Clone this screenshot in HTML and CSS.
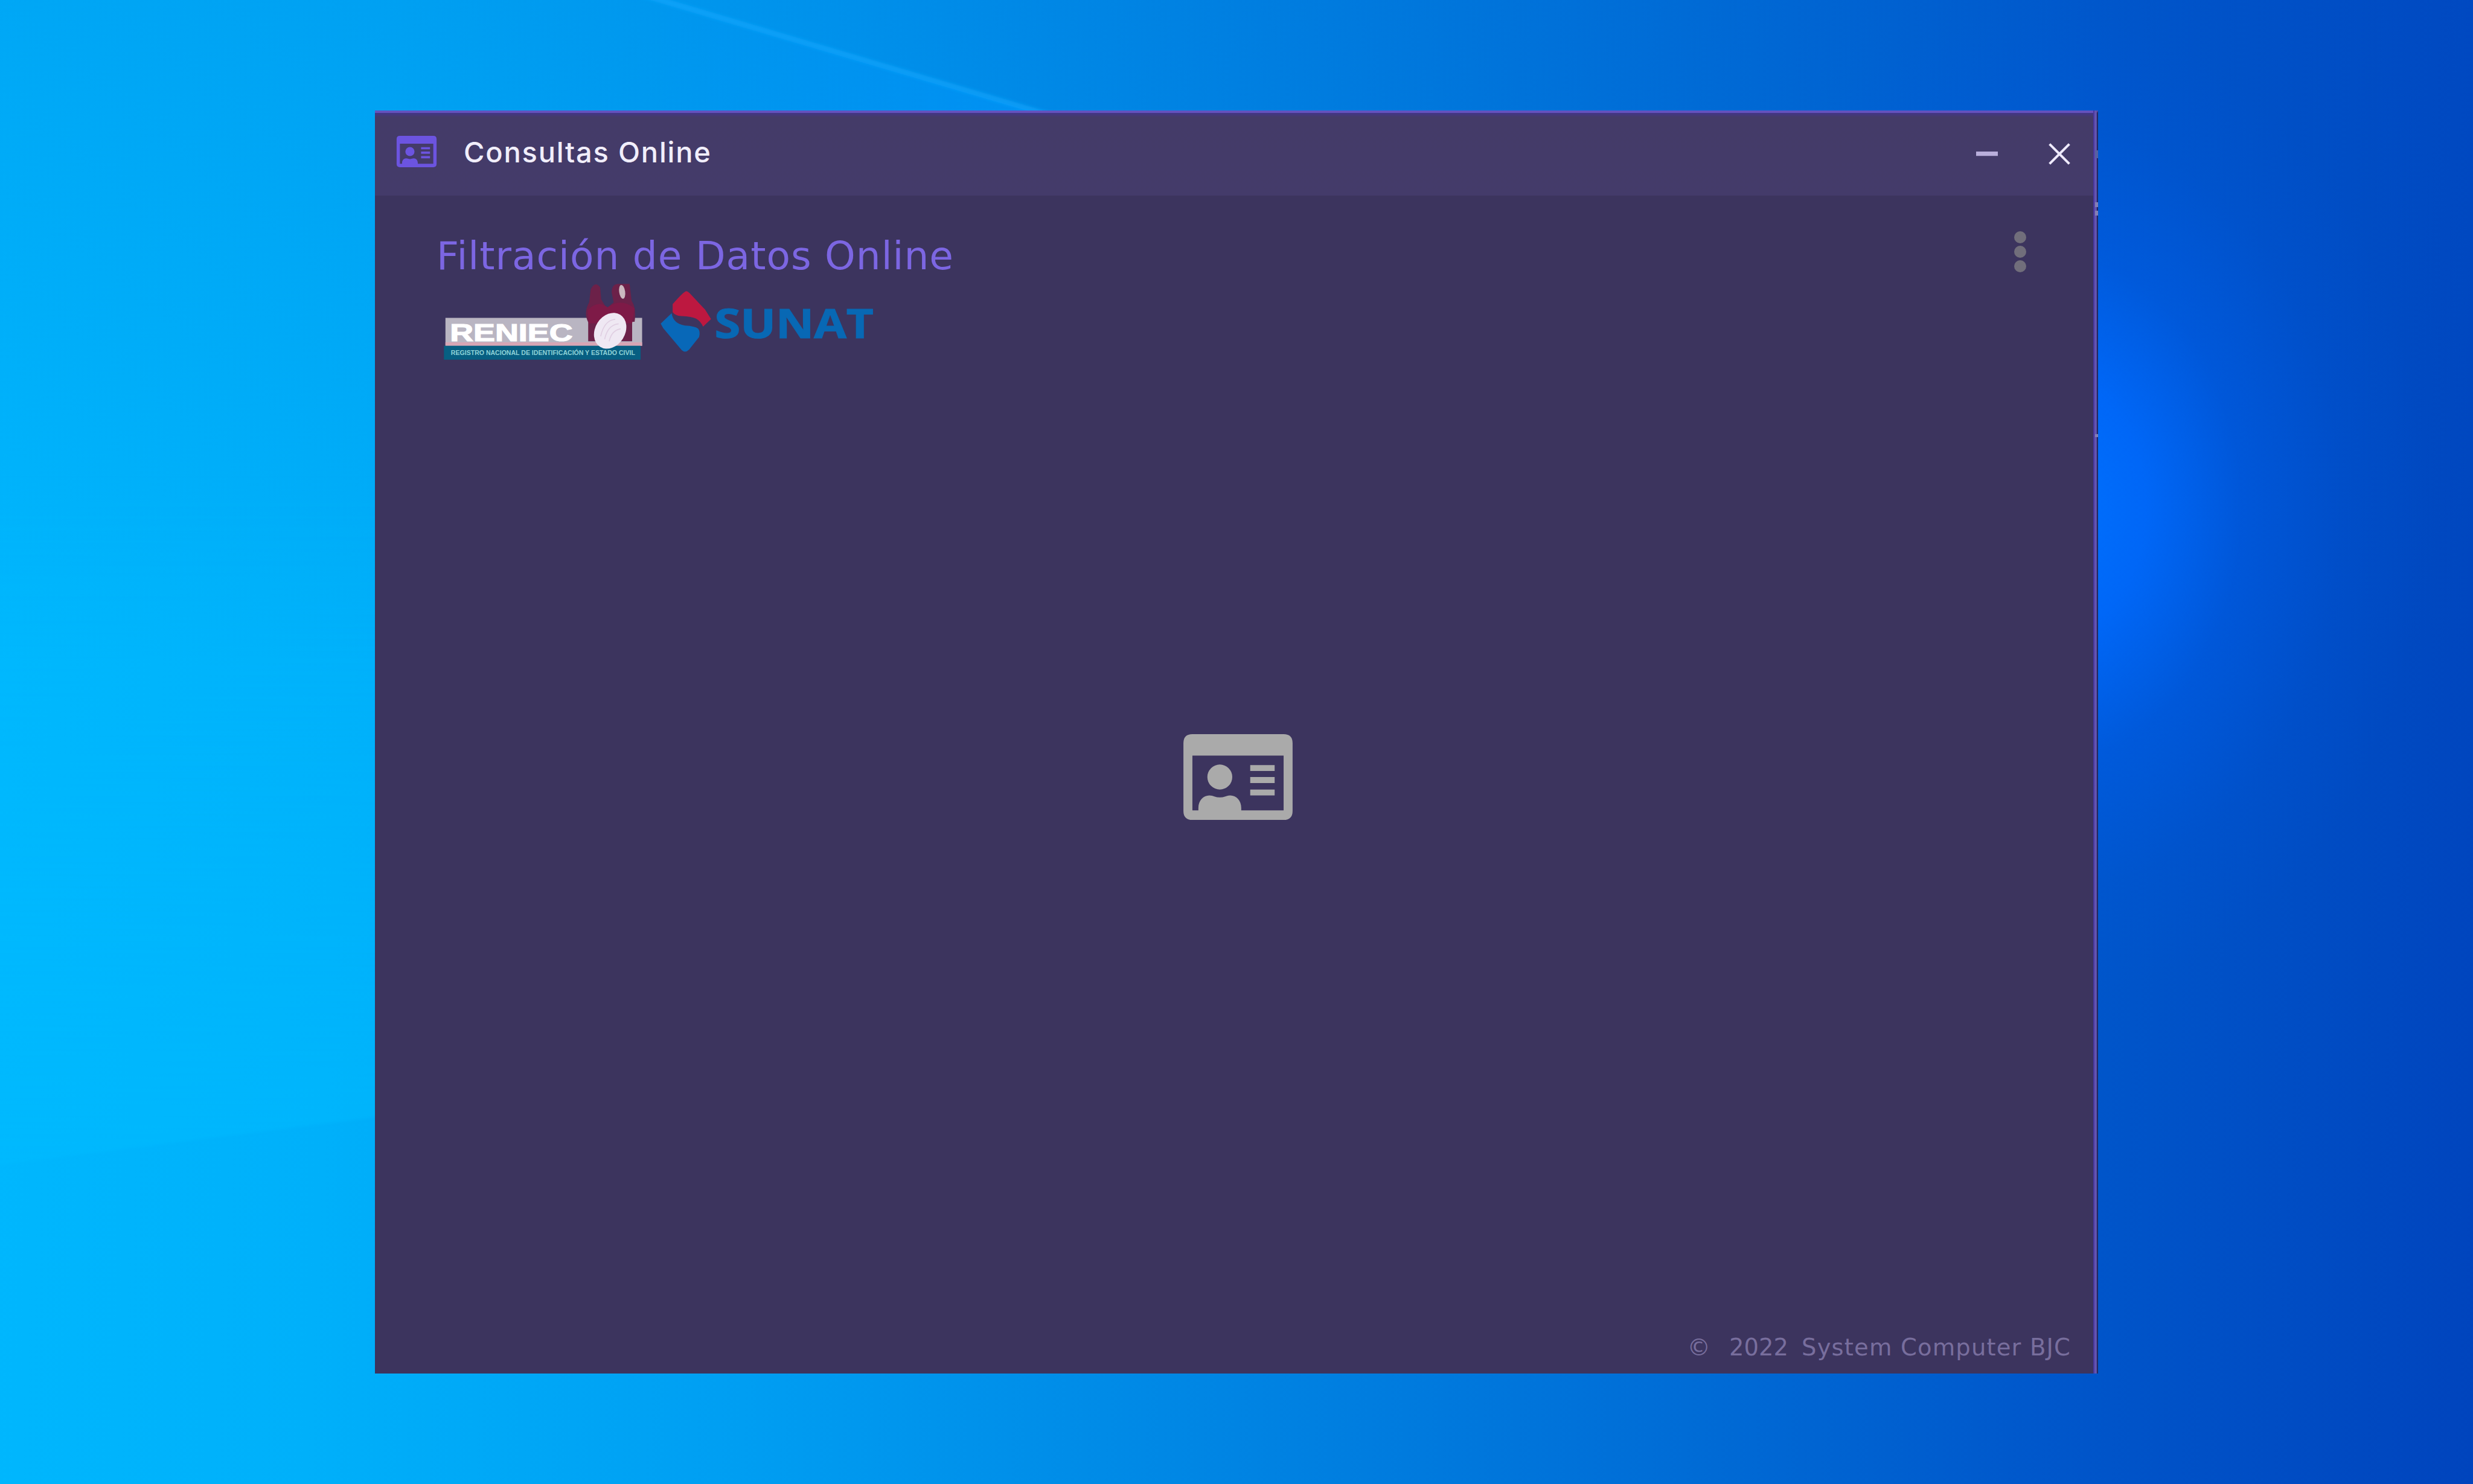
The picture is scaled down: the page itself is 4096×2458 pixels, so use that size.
FILE: index.html
```html
<!DOCTYPE html>
<html lang="es">
<head>
<meta charset="utf-8">
<title>Consultas Online</title>
<link rel="stylesheet" href="styles.css">
</head>
<body>
<main class="desktop">
  <svg class="rays" viewBox="0 0 1568 941" preserveAspectRatio="none" aria-hidden="true">
    <defs>
      <linearGradient id="haze" x1="0" x2="1"><stop offset="0" stop-color="#0098ff" stop-opacity="0"/><stop offset="1" stop-color="#0098ff" stop-opacity=".5"/></linearGradient>
      <linearGradient id="beam" x1="0" y1="0" x2="0" y2="1"><stop offset="0" stop-color="#00bcff" stop-opacity="0"/><stop offset="1" stop-color="#00bcff" stop-opacity=".45"/></linearGradient>
      <filter id="soft"><feGaussianBlur stdDeviation="1"/></filter>
    </defs>
    <path d="M404-3 660 72H404Z" fill="url(#haze)"/>
    <path d="M402-3 415-3 668 72 657 72Z" fill="#14a8ff" fill-opacity=".6" filter="url(#soft)"/>
    <path d="M-4 300H240V708L-4 739Z" fill="url(#beam)" filter="url(#soft)"/>
  </svg>
  <section class="window">
    <header class="titlebar">
      <svg class="title-icon" viewBox="0 0 219 172"><use href="#id-card"/></svg>
      <h1 class="title">Consultas Online</h1>
      <button class="control" aria-label="Minimizar"><svg viewBox="0 0 44 44"><path d="M0 21.500H44" stroke="#b9aedb" stroke-width="9"/></svg></button>
      <button class="control" aria-label="Cerrar"><svg viewBox="0 0 44 44"><path d="M2 2 42 42M42 2 2 42" stroke="#efeaff" stroke-width="5"/></svg></button>
    </header>
    <div class="content">
      <div class="heading-row">
        <h2 class="heading">Filtración de Datos Online</h2>
        <button class="more" aria-label="Opciones"><i></i><i></i><i></i></button>
      </div>
      <div class="logos">
        <svg class="reniec" viewBox="886 564 404 162">
          <path d="M893 637H1287V693H893Z" fill="#b9b5c2"/>
          <path d="M893 686H1287V693H893Z" fill="#d7a6b5"/>
          <path d="M890 693H1284V721H890Z" fill="#075f82"/>
          <path d="M1184 580Q1193 562 1203 576L1205 600 1216 618 1230 606 1226 586Q1226 570 1238 569H1262L1266 603Q1276 617 1272 645H1267V684H1179V646Q1169 626 1181 606Z" fill="#6c2149"/>
          <path d="M1178 622Q1198 600 1218 616 1245 596 1272 618L1267 648H1180Z" fill="#7e1a47"/>
          <ellipse cx="1247" cy="585" rx="6" ry="14" fill="#cbb8bf" transform="rotate(-8 1247 585)"/>
          <ellipse cx="1223" cy="663" rx="30" ry="38" fill="#efe8f3" transform="rotate(32 1223 663)"/>
          <path d="M1204 674Q1211 642 1233 640M1212 680Q1218 651 1240 649M1221 684Q1226 662 1244 659" fill="none" stroke="#e0cfe2" stroke-width="2"/>
          <text class="reniec-name" x="902" y="684" textLength="246" lengthAdjust="spacingAndGlyphs">RENIEC</text>
          <text class="reniec-sub" x="904" y="712" textLength="369" lengthAdjust="spacingAndGlyphs">REGISTRO NACIONAL DE IDENTIFICACIÓN Y ESTADO CIVIL</text>
        </svg>
        <svg class="sunat" viewBox="1320 580 436 134">
          <path d="M1375 585Q1369 587 1348 611V627Q1353 634 1365 635 1387 636 1395 640 1404 645 1409 656L1425 641 1413 622 1382 589Q1378 585 1375 585Z" fill="#bd1840"/>
          <path d="M1346 629 1324 650 1329 659 1366 703Q1373 710 1381 702L1401 677Q1404 666 1399 660 1392 655 1373 654 1349 650 1346 629Z" fill="#0868b8"/>
          <text class="sunat-name" x="1432" y="679" textLength="319" lengthAdjust="spacingAndGlyphs">SUNAT</text>
        </svg>
      </div>
      <div class="center">
        <svg class="card-icon" viewBox="0 0 219 172">
          <g id="id-card" fill="currentColor">
            <path fill-rule="evenodd" d="M18 0H201Q219 0 219 18V154Q219 172 201 172H18Q0 172 0 154V18Q0 0 18 0ZM18 43V153H30V148C30 133 40 123 52 123Q58 123 62 125 73 129 84 125 89 123 94 123C106 123 116 133 116 148V153H201V43Z"/>
            <circle cx="73" cy="86" r="25"/>
            <path d="M134 62H183V74H134ZM134 86H183V98H134ZM134 111H183V123H134Z"/>
          </g>
        </svg>
      </div>
      <footer class="footer"><span class="copy">©</span><span class="year">2022</span><span class="company">System Computer BJC</span></footer>
    </div>
    <span class="edge-mark mark-a"></span><span class="edge-mark mark-b"></span><span class="edge-mark mark-c"></span><span class="edge-mark mark-d"></span>
  </section>
</main>
</body>
</html>
```
FILE: styles.css
```css
* { box-sizing: border-box; }
body { margin: 0; }

.desktop {
  position: relative;
  width: 4096px;
  height: 2458px;
  padding: 183px 0 0 621px;
  overflow: hidden;
  background:
    radial-gradient(ellipse 640px 820px at 3380px 840px, #0072ff, rgba(0, 106, 255, .85) 27%, rgba(0, 96, 244, .4) 52%, rgba(0, 88, 230, .14) 78%, rgba(0, 88, 230, 0) 100%),
    linear-gradient(180deg, rgba(0, 80, 200, .16), rgba(0, 80, 200, 0) 45%),
    linear-gradient(93deg, #00b8fe 0%, #00b0fa 15%, #009ef2 32%, #0086e4 50%, #006cd6 69%, #0057cb 83%, #004dc4 92%, #0044bd 100%);
}
.rays { position: absolute; inset: 0; width: 100%; height: 100%; }

.window {
  position: relative;
  display: flex;
  flex-direction: column;
  width: 2854px;
  height: 2092px;
  background: #3c345e;
  border-top: 4px solid #6552bd;
  border-right: 2px solid #24285f;
}
.window::after {
  content: "";
  position: absolute;
  top: -4px;
  right: 0;
  bottom: 0;
  width: 6px;
  background: linear-gradient(90deg, #3f2d9a, #6959b5 60%, #564aa0);
}
.edge-mark { position: absolute; z-index: 1; right: -2px; width: 5px; height: 8px; background: #8580b4; }
.mark-a { top: 62px; height: 13px; background: #5861a0; }
.mark-b { top: 148px; }
.mark-c { top: 162px; }
.mark-d { top: 532px; height: 5px; }

.titlebar {
  display: flex;
  align-items: center;
  height: 137px;
  padding: 0 44px 4px 35px;
  background: linear-gradient(#43358a 0, #443b68 7px, #443b6a 100%);
}
.title-icon { width: 68px; height: 52px; margin-bottom: 5px; color: #6c54e0; }
.title {
  flex: 1;
  margin: 0 0 3px 44px;
  font: 500 47px/60px Inter, sans-serif;
  letter-spacing: 1.8px;
  color: #f1eefb;
}
.control { padding: 0; border: 0; background: none; margin: 3px 0 0 84px; width: 36px; height: 36px; }
.control svg { display: block; width: 36px; height: 36px; overflow: visible; }

.content { flex: 1; display: flex; flex-direction: column; padding: 0 36px 0 102px; }
.heading-row { display: flex; justify-content: space-between; height: 143px; padding-top: 62px; }
.heading { margin: 0; font: 400 64.500px/76px "DejaVu Sans", sans-serif; letter-spacing: 1px; color: #7c66e2; white-space: nowrap; }
.more { display: flex; flex-direction: column; gap: 4px; margin: -3px 81px 0 0; padding: 0; border: 0; background: none; }
.more i { width: 20px; height: 20px; border-radius: 50%; background: #716e7b; }

.logos { display: flex; align-items: flex-start; gap: 25px; height: 136px; padding-left: 9px; }
.reniec { width: 334px; height: 134px; margin-top: -1px; }
.sunat { width: 360px; height: 111px; margin-top: 11px; }
.reniec-name { font: 700 50px "Liberation Sans", sans-serif; fill: #fff; stroke: #fff; stroke-width: 1.5px; }
.reniec-sub { font: 700 13px "Liberation Sans", sans-serif; fill: #8fd3d8; }
.sunat-name { font: 700 81px "Open Sans", sans-serif; fill: #0868b4; stroke: #0868b4; stroke-width: 1.5px; }

.center { flex: 1; display: flex; justify-content: center; padding: 613px 60px 0 0; }
.card-icon { width: 181px; height: 142px; color: #aaa; }
.footer {
  display: flex;
  justify-content: flex-end;
  height: 66px;
  padding-right: 7px;
  font: 400 38.500px/46px "DejaVu Sans", sans-serif;
  color: #786e9d;
}
.year { margin-left: 31px; }
.company { margin-left: 22px; letter-spacing: 1.15px; }
```
